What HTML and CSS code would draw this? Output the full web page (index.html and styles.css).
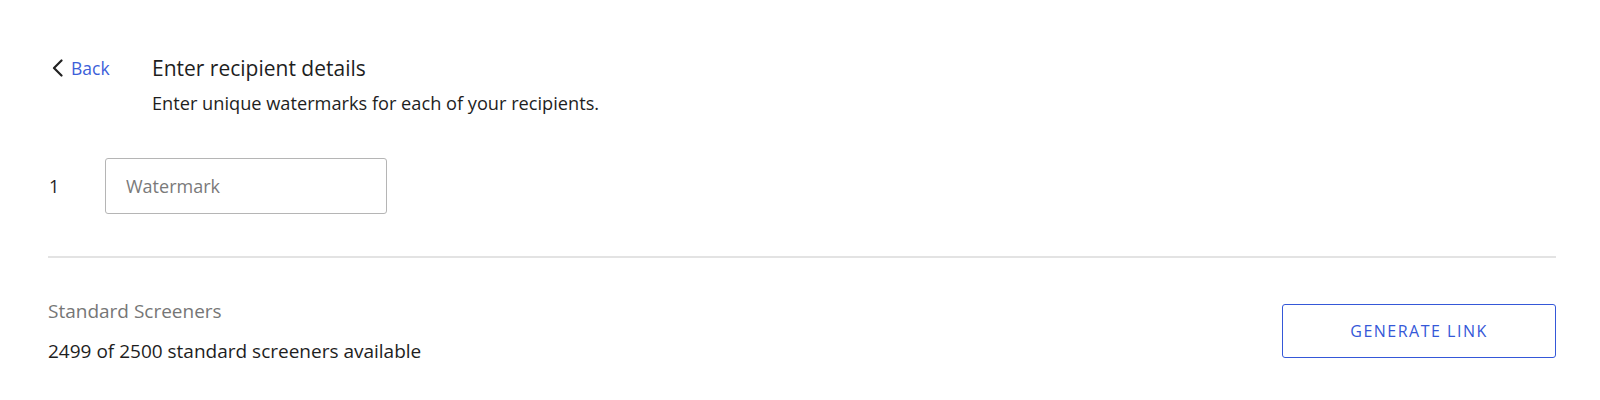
FILE: index.html
```html
<!DOCTYPE html>
<html lang="en">
<head>
  <meta charset="UTF-8">
  <title>Enter recipient details</title>
  <link rel="stylesheet" href="styles.css">
</head>
<body>

  <div class="page">
    <!-- Cabecera -->
    <div class="header">
      <a class="back" href="#">
        <svg width="13" height="18" viewBox="0 0 13 18"><path d="M10.5 1.5 L3 9 L10.5 16.5" fill="none" stroke="#222" stroke-width="2.2" stroke-linecap="round" stroke-linejoin="round"/></svg>
        <span>Back</span>
      </a>
      <div class="titles">
        <h1>Enter recipient details</h1>
        <p>Enter unique watermarks for each of your recipients.</p>
      </div>
    </div>

    <!-- Destinatarios -->
    <div class="recipients">
      <div class="recipient">
        <span class="index">1</span>
        <input class="watermark" type="text" placeholder="Watermark">
      </div>
    </div>

    <hr class="divider">

    <!-- Pie -->
    <div class="footer">
      <div class="quota">
        <div class="quota-label">Standard Screeners</div>
        <div class="quota-count">2499 of 2500 standard screeners available</div>
      </div>
      <button class="generate">GENERATE LINK</button>
    </div>
  </div>

</body>
</html>
```

FILE: styles.css
```css
body {
  font-family: "Open Sans", "Noto Sans", sans-serif;
  background-color: #ffffff;
  color: #1e1e1e;
  margin: 0;
  padding: 0;
}

.page {
  padding: 56px 44px 0 48px;
}

.header {
  display: flex;
  align-items: flex-start;
}

.back {
  display: flex;
  align-items: center;
  gap: 7px;
  width: 104px;
  padding-left: 3px;
  box-sizing: border-box;
  margin-top: 2px;
  text-decoration: none;
  color: #3d5fd9;
  font-size: 17.5px;
  line-height: 20px;
}

.titles h1 {
  margin: 0;
  font-size: 21px;
  line-height: 24px;
  font-weight: 400;
  color: #1e1e1e;
}

.titles p {
  margin: 13px 0 0;
  font-size: 18.2px;
  line-height: 20px;
}

.recipients {
  margin-top: 45px;
}

.recipient {
  display: flex;
  align-items: center;
}

.index {
  width: 56px;
  padding-left: 1px;
  font-size: 18px;
}

.watermark {
  width: 282px;
  height: 56px;
  box-sizing: border-box;
  border: 1px solid #b5b5b5;
  border-radius: 3px;
  padding: 0 20px;
  font-family: inherit;
  font-size: 18px;
  color: #222;
  outline: none;
}

.watermark::placeholder {
  color: #7a7a7a;
}

.divider {
  margin: 42px 0 0;
  border: none;
  border-top: 2px solid #e3e3e3;
}

.footer {
  display: flex;
  justify-content: space-between;
  align-items: flex-start;
  padding-top: 43px;
}

.quota-label {
  font-size: 19px;
  line-height: 20px;
  color: #767676;
}

.quota-count {
  margin-top: 20px;
  font-size: 19px;
  line-height: 20px;
}

.generate {
  margin-top: 3px;
  width: 274px;
  height: 54px;
  border: 1.5px solid #3558d8;
  border-radius: 3px;
  background-color: #ffffff;
  color: #3558d8;
  font-family: inherit;
  font-size: 16px;
  letter-spacing: 1.5px;
  cursor: pointer;
}
```
